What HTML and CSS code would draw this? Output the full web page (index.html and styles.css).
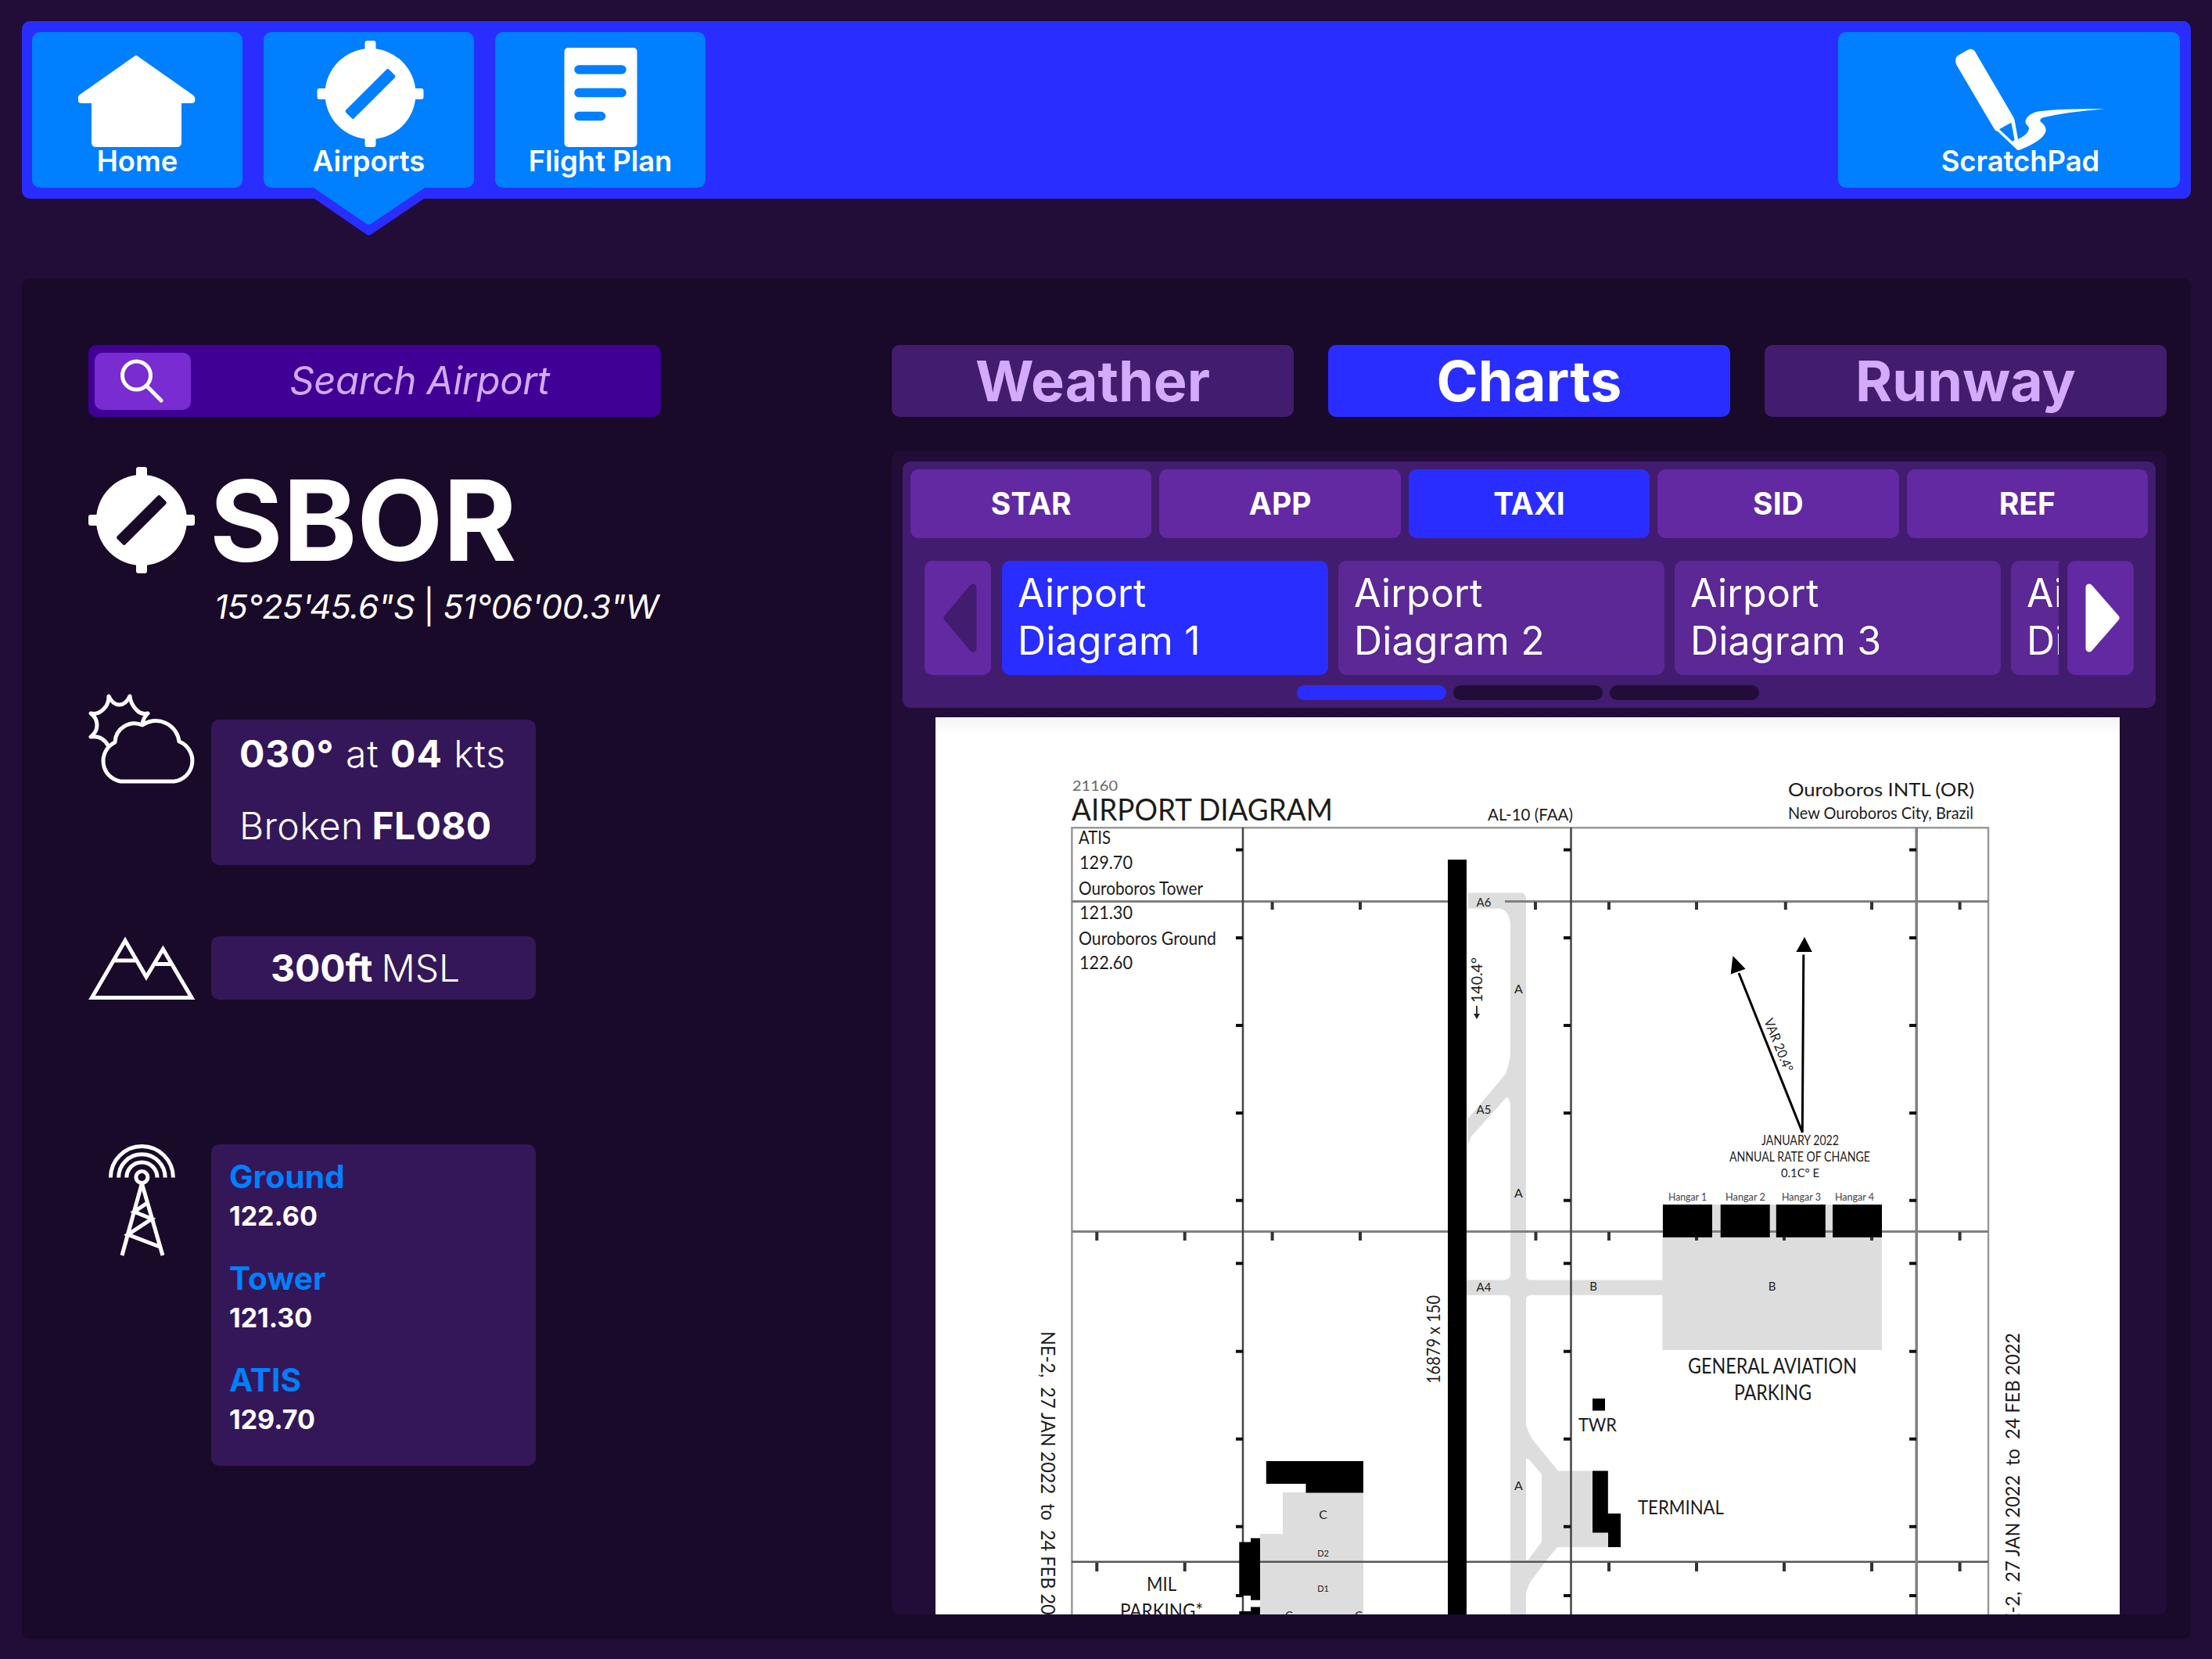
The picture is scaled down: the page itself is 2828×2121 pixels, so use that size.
FILE: index.html
```html
<!DOCTYPE html>
<html lang="en">
<head>
<meta charset="utf-8">
<title>Airports</title>
<link rel="stylesheet" href="styles.css">
</head>
<body>
<nav class="topbar">
  <a class="nav-btn">
    <svg class="nav-icon" width="152" height="136" viewBox="100 52 152 136"><path d="M171 72.500Q174 69.500 177 72.500L246 121Q249.500 123.500 249.500 127Q249.500 132 245 132H232V182Q232 188 226 188H123Q117 188 117 182V132H104Q99.500 132 99.500 127Q99.500 123 102 121Z" fill="#fff"/></svg>
    <span class="nav-label">Home</span>
  </a>
  <a class="nav-btn nav-active">
    <svg class="nav-icon" width="140" height="136" viewBox="-71.500 -68 140 136" overflow="visible"><g fill="#fff"><circle r="58"/><rect x="-7" y="-68" width="14" height="136" rx="3"/><rect x="-68" y="-7" width="136" height="14" rx="3"/></g><rect x="-39" y="-7.500" width="78" height="15" rx="2.500" transform="rotate(-45)" fill="#007fff"/></svg>
    <span class="nav-label">Airports</span>
    <svg class="pointer" width="144" height="64" viewBox="400 239 144 64"><path d="M400.500 253L467.500 299Q471.500 302.500 475.500 299L543.500 253V239H400.500Z" fill="#2a2dff"/><path d="M401 239V240L467.500 285.500Q471.500 288.500 475.500 285.500L543 240V239Z" fill="#007fff"/></svg>
  </a>
  <a class="nav-btn">
    <svg class="nav-icon" width="94" height="136" viewBox="720.500 52 94 136"><rect x="721" y="61" width="93" height="127" rx="5" fill="#fff"/><g stroke="#007fff" stroke-width="11.500" stroke-linecap="round"><path d="M739.500 89H794.500M739.500 118.500H794.500M739.500 148.500H768"/></g></svg>
    <span class="nav-label">Flight Plan</span>
  </a>
  <a class="nav-btn nav-scratch">
    <svg class="nav-icon" width="204" height="136" viewBox="540 156 606 408" overflow="visible"><path fill="#fff" fill-rule="evenodd" d="M600 215L640 192Q657 183 668 196L818 452Q821 458 822 467L834 534Q870 518 876 494Q877 488 869 480Q855 464 870 449Q885 432 915 427Q1000 415 1169 418Q1030 428 930 451Q914 458 921 467Q945 485 940 505Q930 540 838 576H832L803 548L757 505Q748 504 743 495L598 249Q590 228 600 215ZM762 496L812 542L821 537L808 470Z"/></svg>
    <span class="nav-label">ScratchPad</span>
  </a>
</nav>

<main class="page">
  <section class="info">
    <div class="search">
      <button class="search-btn"><svg width="60" height="60" viewBox="1 -1 60 60" fill="none" stroke="#fff" stroke-width="5" stroke-linecap="round"><circle cx="22.500" cy="22" r="18"/><path d="M36 36L54 54"/></svg></button>
      <span class="search-text">Search Airport</span>
    </div>
    <div class="ident">
      <svg width="136" height="136" viewBox="-68 -68 136 136"><g fill="#fff"><circle r="58"/><rect x="-7" y="-68" width="14" height="136" rx="3"/><rect x="-68" y="-7" width="136" height="14" rx="3"/></g><rect x="-39" y="-7.500" width="78" height="15" rx="2.500" transform="rotate(-45)" fill="#190a29"/></svg>
      <h1 class="code">SBOR</h1>
    </div>
    <p class="coords">15°25'45.6"S <span class="bar">|</span> 51°06'00.3"W</p>

    <div class="row row-weather">
      <svg class="row-icon" width="140" height="120" viewBox="0 0 140 120" fill="none" stroke="#fff" stroke-width="5" stroke-linejoin="round"><path d="M69 42Q69 34 76 27Q67 29 61 22Q54 15 53 5Q48 16 39.500 16T26 5Q26 16 19 22Q12 29 3 27Q11 33 11 42T3 57Q18 55 25 68"/><path d="M34 64A25 25 0 0 1 69 42A30 30 0 0 1 116 63A26.500 26.500 0 0 1 109.600 114H41A26.500 26.500 0 0 1 34 64Z"/></svg>
      <div class="card weather-card">
        <p class="wind"><b>030°</b> at <b>04</b> kts</p>
        <p>Broken<b class="tight">FL080</b></p>
      </div>
    </div>
    <div class="row row-elev">
      <svg class="row-icon" width="140" height="82" viewBox="0 0 140 82" fill="none" stroke="#fff" stroke-width="5"><path d="M4.500 78.500L47 5.500L74 52L95.400 16.500L132 78.500ZM32 31H61M85 35.500H106"/></svg>
      <div class="card elev-card"><b>300ft</b><span class="tight">MSL</span></div>
    </div>
    <div class="row row-freq">
      <svg class="row-icon" width="140" height="145" viewBox="0 0 140 145" fill="none" stroke="#fff" stroke-width="5"><path d="M28.400 42.500A40 40 0 0 1 108.400 42.500M38.600 42.500A29.800 29.800 0 0 1 98.200 42.500M48.800 42.500A19.600 19.600 0 0 1 88 42.500"/><circle cx="68.400" cy="42" r="7.500"/><path d="M68.400 50L43 142M68.400 50L95 142M76.200 74.300L58.600 86.300L81 95.300L50.500 115.300L91.300 131"/></svg>
      <div class="card freq-card">
        <div><h3>Ground</h3><p>122.60</p></div>
        <div><h3>Tower</h3><p>121.30</p></div>
        <div><h3>ATIS</h3><p>129.70</p></div>
      </div>
    </div>
  </section>

  <section class="detail">
    <div class="tabs">
      <a class="tab">Weather</a>
      <a class="tab on">Charts</a>
      <a class="tab">Runway</a>
    </div>
    <div class="panel">
      <div class="picker">
        <div class="chips">
          <a class="chip">STAR</a><a class="chip">APP</a><a class="chip on">TAXI</a><a class="chip">SID</a><a class="chip">REF</a>
        </div>
        <div class="carousel">
          <button class="arrow"><svg width="85" height="146" viewBox="0 0 85 146"><path d="M62 34V112L29 73Z" fill="#421c6e" stroke="#421c6e" stroke-width="9" stroke-linejoin="round"/></svg></button>
          <div class="track">
            <a class="doc on">Airport<br>Diagram 1</a>
            <a class="doc">Airport<br>Diagram 2</a>
            <a class="doc">Airport<br>Diagram 3</a>
            <a class="doc">Airport<br>Diagram 4</a>
          </div>
          <button class="arrow"><svg width="85" height="146" viewBox="0 0 85 146"><path d="M28 34V112L62 73Z" fill="#fff" stroke="#fff" stroke-width="9" stroke-linejoin="round"/></svg></button>
        </div>
        <div class="dots"><i class="on"></i><i></i><i></i></div>
      </div>
      <svg class="chart" width="1514" height="1147" viewBox="1196 917 1514 1147">
        <defs>
          <linearGradient id="top" x1="0" y1="0" x2="0" y2="1"><stop offset="0" stop-color="#f3f3f3"/><stop offset="1" stop-color="#fff"/></linearGradient>
          <path id="vt" d="M-9 1086.400H0M-9 1199H0M-9 1311H0M-9 1423H0M-9 1534.800H0M-9 1615.300H0M-9 1727.800H0M-9 1839.800H0M-9 1951.800H0M-9 2040H0"/>
        </defs>
        <rect x="1196" y="917" width="1514" height="1147" fill="#fff"/>
        <rect x="1196" y="917" width="1514" height="22" fill="url(#top)"/>
        <!-- taxiways and aprons -->
        <g fill="#ddd">
          <path d="M1877 1141.500H1944Q1951 1141.500 1951 1149V1632Q1953 1636.600 1958 1636.600H2126V1655.800H1958Q1951 1656 1951 1662V1821Q1953 1830 1959 1840L1992 1880.600H2056V1978H1991L1978.600 1993L1957 2021.700Q1951 2032 1951 2040V2064H1931V1662Q1931 1656 1925 1655.800H1875V1636.600H1924Q1931 1634 1931 1630V1411Q1928 1400 1925 1404L1881 1453L1876 1465V1431L1925 1373Q1931 1355 1931 1346V1180Q1928 1163 1918 1161.400H1877Z"/>
          <path d="M2125.400 1540H2406V1726H2125.400ZM1640 1908H1743V2064H1611V1961H1640Z"/>
        </g>
        <path d="M1951 1865H1954L1971 1885V1971L1954 1994L1951 1995Z" fill="#fff"/>
        <!-- grid -->
        <g fill="none">
          <path d="M1370.400 2064V1058.300H2542V2064" stroke="#999" stroke-width="2.500"/>
          <path d="M1370 1152.600H1851M1924 1152.600H2542M1370 1574.400H2542" stroke="#808080" stroke-width="3"/>
          <path d="M1370 1996.800H2542" stroke="#555" stroke-width="2.500"/>
          <path d="M1589 1058V2064M2008.500 1058V2064" stroke="#444" stroke-width="2.500"/>
          <path d="M2450.200 1058V2064" stroke="#808080" stroke-width="3.500"/>
          <g stroke="#111" stroke-width="4"><use href="#vt" x="1589"/><use href="#vt" x="2008"/><use href="#vt" x="2450"/></g>
          <g stroke="#333" stroke-width="4">
            <path d="M1626.600 1153v10M1739 1153v10M1963 1153v10M2057 1153v10M2169 1153v10M2282.800 1153v10M2393 1153v10M2505.600 1153v10"/>
            <path d="M1402.300 1575v11M1514.700 1575v11M1626.600 1575v11M1739 1575v11M1963.500 1575v11M2057 1575v11M2169 1575v11M2281 1575v11M2393 1575v11M2505.600 1575v11"/>
            <path d="M1402.300 1998v11M1514.700 1998v11M2057 1998v11M2169 1998v11M2281 1998v11M2393 1998v11M2505.600 1998v11"/>
          </g>
        </g>
        <!-- runway and buildings -->
        <path d="M1851 1099H1875V2064H1851ZM2126 1540h63v42h-63ZM2199.700 1540h63v42h-63ZM2270.800 1540h63v42h-63ZM2343 1540h63v42h-63ZM2036 1788h16v15.500h-16ZM2036 1880.600H2055.800V1935H2072V1978H2056V1959.600H2036ZM1618.800 1868H1743V1908.500H1669.500V1897H1618.800ZM1584.300 1971.400H1599V1966.500H1611V2045.800H1599V2040H1584.300ZM1584.300 2060H1599V2054.400H1611V2064H1584.300Z" fill="#000"/>
        <!-- variation arrows -->
        <path d="M2305.800 1220.500L2304.300 1447.700L2223 1244" fill="none" stroke="#000" stroke-width="3"/>
        <path d="M2307 1198L2296.400 1217H2316.800ZM2215.400 1222L2231.600 1238.700L2212.700 1245.600Z"/>
        <path d="M1888 1286V1300" stroke="#333" stroke-width="2"/><path d="M1884 1296H1892L1888 1303Z" fill="#222"/>
        <g class="chart-text">
          <text x="1371" y="1011" font-size="18" fill="#666" textLength="58" lengthAdjust="spacingAndGlyphs">21160</text>
          <text x="1370" y="1049" font-size="38.500" textLength="334" lengthAdjust="spacingAndGlyphs">AIRPORT DIAGRAM</text>
          <text x="1902" y="1049" font-size="21.500" textLength="109" lengthAdjust="spacingAndGlyphs">AL-10 (FAA)</text>
          <text x="2286" y="1018" font-size="23.500" textLength="238" lengthAdjust="spacingAndGlyphs">Ouroboros INTL (OR)</text>
          <text x="2286" y="1047" font-size="20.500" textLength="237" lengthAdjust="spacingAndGlyphs">New Ouroboros City, Brazil</text>
          <text x="1379" y="1079" font-size="22.500" textLength="41" lengthAdjust="spacingAndGlyphs">ATIS</text>
          <text x="1380" y="1111" font-size="23" textLength="68" lengthAdjust="spacingAndGlyphs">129.70</text>
          <text x="1379" y="1144" font-size="22.500" textLength="159" lengthAdjust="spacingAndGlyphs">Ouroboros Tower</text>
          <text x="1380" y="1175" font-size="23" textLength="68" lengthAdjust="spacingAndGlyphs">121.30</text>
          <text x="1379" y="1208" font-size="22.500" textLength="176" lengthAdjust="spacingAndGlyphs">Ouroboros Ground</text>
          <text x="1380" y="1239" font-size="23" textLength="68" lengthAdjust="spacingAndGlyphs">122.60</text>
          <text transform="translate(1895 1282) rotate(-90)" font-size="20" textLength="58" lengthAdjust="spacingAndGlyphs">140.4°</text>
          <text transform="translate(1841 1769) rotate(-90)" font-size="23.500" textLength="113" lengthAdjust="spacingAndGlyphs">16879 x 150</text>
          <text class="pre" transform="translate(1331 1702) rotate(90)" font-size="25" textLength="390" lengthAdjust="spacingAndGlyphs">NE-2,  27 JAN 2022  to  24 FEB 2022</text>
          <text class="pre" transform="translate(2581.500 2094) rotate(-90)" font-size="25" textLength="390" lengthAdjust="spacingAndGlyphs">NE-2,  27 JAN 2022  to  24 FEB 2022</text>
          <text transform="translate(2255 1305) rotate(68)" font-size="17" textLength="72" lengthAdjust="spacingAndGlyphs">VAR 20.4°</text>
          <text x="2252" y="1463.500" font-size="16.500" textLength="99" lengthAdjust="spacingAndGlyphs">JANUARY 2022</text>
          <text x="2211" y="1485" font-size="16.500" textLength="180" lengthAdjust="spacingAndGlyphs">ANNUAL RATE OF CHANGE</text>
          <text x="2277" y="1505" font-size="16" textLength="49" lengthAdjust="spacingAndGlyphs">0.1C° E</text>
          <g font-size="12.500" fill="#444">
            <text x="2133" y="1535" textLength="49" lengthAdjust="spacingAndGlyphs">Hangar 1</text>
            <text x="2206" y="1535" textLength="51" lengthAdjust="spacingAndGlyphs">Hangar 2</text>
            <text x="2278" y="1535" textLength="50" lengthAdjust="spacingAndGlyphs">Hangar 3</text>
            <text x="2346" y="1535" textLength="50" lengthAdjust="spacingAndGlyphs">Hangar 4</text>
          </g>
          <text x="2158" y="1756" font-size="26" textLength="216" lengthAdjust="spacingAndGlyphs">GENERAL AVIATION</text>
          <text x="2217" y="1790" font-size="26" textLength="99" lengthAdjust="spacingAndGlyphs">PARKING</text>
          <text x="2018" y="1830" font-size="24" textLength="49" lengthAdjust="spacingAndGlyphs">TWR</text>
          <text x="2094" y="1936" font-size="25.500" textLength="110" lengthAdjust="spacingAndGlyphs">TERMINAL</text>
          <text x="1466" y="2034" font-size="25" textLength="38" lengthAdjust="spacingAndGlyphs">MIL</text>
          <text x="1432" y="2068" font-size="25" textLength="106" lengthAdjust="spacingAndGlyphs">PARKING*</text>
          <g font-size="15" text-anchor="middle" fill="#222">
            <text x="1897" y="1159">A6</text><text x="1897" y="1424">A5</text><text x="1897" y="1651">A4</text>
            <text x="1941.500" y="1270" font-size="16">A</text><text x="1941.500" y="1531" font-size="16">A</text><text x="1941.500" y="1905" font-size="16">A</text>
            <text x="2037" y="1650">B</text><text x="2265.600" y="1650">B</text>
            <text x="1691.500" y="1942" font-size="16">C</text>
            <text x="1691.500" y="1990" font-size="11">D2</text><text x="1691.500" y="2034.500" font-size="11">D1</text>
            <text x="1648" y="2071">C</text><text x="1737" y="2071">C</text>
          </g>
        </g>
      </svg>
    </div>
  </section>
</main>
</body>
</html>
```
FILE: styles.css
```css
* { box-sizing: border-box; margin: 0; padding: 0; }
body {
  width: 2828px;
  height: 2121px;
  padding: 27px 27px 25px 28px;
  overflow: hidden;
  background: #220d38;
  color: #fff;
  font-family: Inter, "Liberation Sans", sans-serif;
}
button { border: 0; font: inherit; }
svg { display: block; flex: none; }

/* Top navigation */
.topbar {
  display: flex;
  gap: 27px;
  height: 227px;
  padding: 14px 14px 14px 13px;
  border-radius: 10px;
  background: #2a2dff;
}
.nav-btn {
  position: relative;
  display: flex;
  flex-direction: column;
  align-items: center;
  width: 269px;
  height: 199px;
  padding-top: 11px;
  border-radius: 10px;
  background: #007fff;
}
.nav-label { font-size: 36.4px; font-weight: 600; line-height: 37px; white-space: nowrap; }
.nav-scratch { width: 437px; margin-left: auto; padding-left: 29px; }
.pointer { position: absolute; left: 63px; top: 198px; }

/* Page body */
.page {
  display: flex;
  justify-content: space-between;
  height: 1740px;
  margin-top: 102px;
  padding: 85px 31px 32px 85px;
  border-radius: 10px;
  background: #190a29;
}
.info { width: 732px; }
.search {
  display: flex;
  align-items: center;
  height: 92px;
  padding-left: 8px;
  border-radius: 10px;
  background: #400095;
}
.search-btn {
  display: grid;
  place-items: center;
  width: 123px;
  height: 73px;
  border-radius: 10px;
  background: #782cd2;
}
.search-text {
  flex: 1;
  padding-right: 16px;
  text-align: center;
  font-size: 49px;
  font-style: italic;
  letter-spacing: -.4px;
  line-height: 92px;
  color: #d4aaff;
}
.ident { display: flex; align-items: center; gap: 19px; height: 136px; margin-top: 64px; }
.code { font-size: 143px; font-weight: 700; line-height: 136px; }
.coords {
  height: 52px;
  margin: 16px 0 0 161px;
  font-size: 43px;
  font-style: italic;
  line-height: 52px;
  letter-spacing: -.67px;
  white-space: nowrap;
}
.bar { font-style: normal; }

.row { display: flex; }
.row-icon { margin-right: 17px; }
.row-weather { margin-top: 84px; }
.row-elev { margin-top: 91px; }
.row-freq { margin-top: 184px; }
.card { width: 415px; border-radius: 10px; background: #341759; font-size: 48px; font-weight: 300; }
.card b { font-weight: 700; }
.tight { margin-left: 11px; }
.weather-card {
  display: flex;
  flex-direction: column;
  gap: 6px;
  height: 186px;
  margin-top: 35px;
  padding: 1px 0 0 36px;
  line-height: 86px;
  letter-spacing: .35px;
  white-space: nowrap;
}
.wind { letter-spacing: .95px; }
.elev-card {
  display: flex;
  align-items: center;
  justify-content: center;
  height: 81px;
  padding-right: 21px;
}
.freq-card { display: flex; flex-direction: column; gap: 30px; height: 411px; padding: 17px 23px; line-height: 50px; }
.freq-card h3 { font-size: 40.8px; font-weight: 700; line-height: 49px; color: #007fff; }
.freq-card p { font-size: 34px; font-weight: 700; line-height: 51px; }

/* Charts side */
.detail { display: flex; flex-direction: column; width: 1630px; }
.tabs { display: flex; gap: 44px; height: 92px; }
.tab {
  display: grid;
  place-items: center;
  flex: 1;
  border-radius: 10px;
  background: #421c6e;
  color: #d4aaff;
  font-size: 72px;
  font-weight: 700;
  line-height: 92px;
}
.tab.on, .chip.on, .doc.on, .dots .on { background: #2a2dff; color: #fff; }
.panel {
  flex: 1;
  margin-top: 44px;
  padding: 13px 14px 0;
  border-radius: 10px;
  background: #220d38;
}
.picker { height: 315px; padding: 10px; border-radius: 10px; background: #421c6e; }
.chips { display: flex; gap: 10px; height: 88px; }
.chip {
  display: grid;
  place-items: center;
  flex: 1;
  padding-bottom: 1px;
  border-radius: 10px;
  background: #6229a3;
  font-size: 39px;
  font-weight: 700;
}
.carousel { display: flex; height: 146px; margin: 29px 18px 0; }
.arrow { width: 85px; border-radius: 10px; background: #6229a3; }
.track { display: flex; gap: 13px; width: 1351px; margin: 0 11px 0 14px; overflow: hidden; }
.doc {
  flex: none;
  width: 417px;
  padding: 11px 20px;
  border-radius: 10px;
  background: #5b2896;
  font-size: 50px;
  font-weight: 400;
  line-height: 61px;
  letter-spacing: .2px;
}
.dots { display: flex; justify-content: center; gap: 9px; margin: 13px 3px 0 0; }
.dots i { width: 191px; height: 19px; border-radius: 9.5px; background: #220d38; }
.chart { margin: 12px 0 0 42px; }
.chart-text { font-family: Lato, "Liberation Sans", sans-serif; fill: #1c1c1c; }
.pre { white-space: pre; }
```
